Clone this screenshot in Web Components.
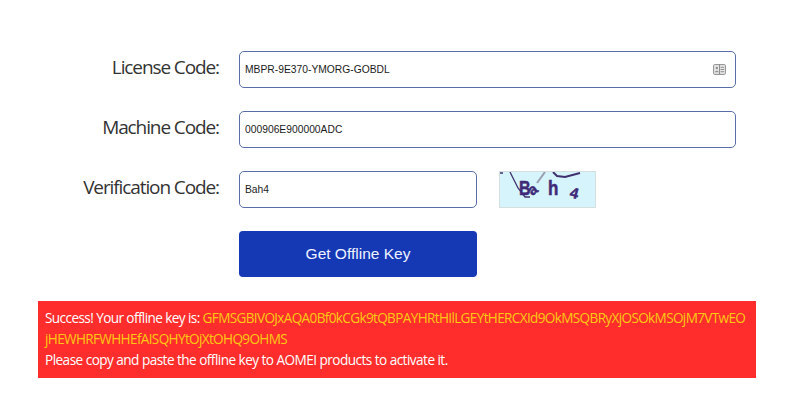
<!DOCTYPE html>
<html lang="en"><head><meta charset="utf-8"><title>Offline Key</title>
<style>html,body{margin:0;background:#fff}body{width:800px;height:400px;overflow:hidden}</style>
</head><body>
<offline-page>
  <form-row label="License Code:"><text-box value="MBPR-9E370-YMORG-GOBDL" icon></text-box></form-row>
  <form-row label="Machine Code:"><text-box value="000906E900000ADC"></text-box></form-row>
  <form-row label="Verification Code:"><text-box value="Bah4" short></text-box><captcha-image></captcha-image></form-row>
  <form-row><action-button>Get Offline Key</action-button></form-row>
  <result-banner slot="banner"><span>Success! Your offline key is: </span><key-text>GFMSGBIVOJxAQA0Bf0kCGk9tQBPAYHRtHIlLGEYtHERCXId9OkMSQBRyXjOSOkMSOjM7VTwEO</key-text><br><key-text>jHEWHRFWHHEfAISQHYtOjXtOHQ9OHMS</key-text><br><span class="note">Please copy and paste the offline key to AOMEI products to activate it.</span></result-banner>
</offline-page>
<script>
function def(name, css, html, init){
  customElements.define(name, class extends HTMLElement{
    constructor(){super();const r=this.attachShadow({mode:'open'});r.innerHTML='<style>'+css+'</style>'+html;}
    connectedCallback(){ if(init)init(this,this.shadowRoot); }
  });
}
def('offline-page',
 ':host{display:flex;flex-direction:column;width:800px;height:400px;box-sizing:border-box;padding-top:51px}.rows{display:flex;flex-direction:column;gap:23px}.b{margin:24px 44px 0 38px}',
 '<div class="rows"><slot></slot></div><div class="b"><slot name="banner"></slot></div>');
def('form-row',
 ':host{display:grid;grid-template-columns:219px 497px;column-gap:20px}label{justify-self:end;align-self:center;padding-bottom:5px;font:19px/26px "Open Sans",sans-serif;letter-spacing:-1.1px;color:#333}.c{display:flex;gap:22px;align-items:stretch;grid-column:2}',
 '<label></label><div class="c"><slot></slot></div>',
 (h,r)=>{const l=r.querySelector('label');if(h.hasAttribute('label'))l.textContent=h.getAttribute('label');else l.style.display='none';});
def('text-box',
 ':host{display:flex;flex:1;align-items:center;justify-content:space-between;box-sizing:border-box;height:37px;border:1px solid #5a6da8;border-radius:5px;padding:0 9px 1px 5px;background:#fff;font:10.3px "Liberation Sans",Arial,sans-serif;color:#1c1c1c}:host([short]){flex:0 0 238px}svg{display:none}:host([icon]) svg{display:block}',
 '<span></span><svg width="13" height="11" viewBox="0 0 13 11" fill="none" stroke="#8f8f8f"><rect x=".6" y=".6" width="11.8" height="9.8" rx="1" fill="#e8e8e8"/><circle cx="3.800" cy="4" r="1.200" fill="#8f8f8f" stroke="none"/><path d="M2 8.200c.4-1.800 3.200-1.800 3.600 0z" fill="#8f8f8f" stroke="none"/><path d="M6.500.6v9.800M7.500 3.300h3.500M7.500 5.500h3.500M7.500 7.700h3.500"/></svg>',
 (h,r)=>{r.querySelector('span').textContent=h.getAttribute('value');});
def('captcha-image',
 ':host{display:block;width:97px;height:37px;box-sizing:border-box;border:1px solid #d5dfe0;background:#d6f4fb;overflow:hidden}svg{display:block}text{font-family:"Liberation Sans",Arial,sans-serif;font-weight:bold;fill:#3f2a78;stroke:#3f2a78;stroke-width:.5}',
 '<svg width="95" height="35" viewBox="0 0 95 35" fill="none"><path d="M0 1h3M10 0l8 16 7 9h5" stroke="#41306f" stroke-width="1.300"/><path d="M37 11l8-11" stroke="#9a9fb0" stroke-width="2"/><path d="M53 0l4 4 8 1 15-4" stroke="#41306f" stroke-width="2"/><text transform="translate(19 23) scale(.8 1)" style="font-size:20px">B</text><text transform="translate(32 24) rotate(-35)" style="font-size:15px">a</text><text transform="translate(48 23) scale(.85 1)" style="font-size:20px">h</text><text transform="translate(69 25) rotate(15)" style="font-size:15px">4</text></svg>');
def('action-button',
 ':host{display:flex;align-items:center;justify-content:center;box-sizing:border-box;width:238px;height:46px;border-radius:4px;background:#1538b4;color:#eef2ff;font:15.5px "Liberation Sans",Arial,sans-serif}',
 '<slot></slot>');
def('result-banner',
 ':host{display:block;box-sizing:border-box;width:718px;height:77px;padding:6px 7px 0 7px;background:#ff2d2b;color:#fff;font:13.6px/21px "Open Sans",sans-serif;letter-spacing:-.6px;white-space:nowrap}::slotted(.note){letter-spacing:-.54px}',
 '<slot></slot>');
def('key-text',':host{color:#ffc814;letter-spacing:-.66px}','<slot></slot>');
</script>
</body></html>
